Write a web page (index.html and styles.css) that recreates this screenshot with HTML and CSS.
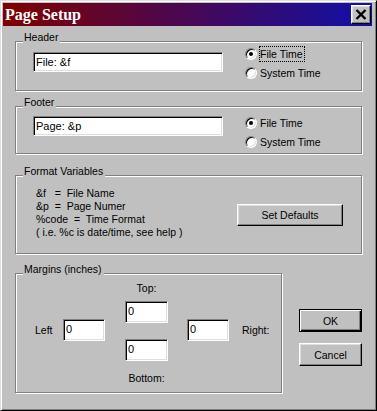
FILE: index.html
```html
<!DOCTYPE html>
<html lang="en">

<head>
    <meta charset="utf-8">
    <meta name="viewport" content="width=device-width, initial-scale=1.0">
    <title>Page Setup</title>
    <link rel="stylesheet" href="styles.css">
</head>

<body>
    <div class="window">
        <div class="titlebar">
            <span class="title">Page Setup</span>
            <button class="close" aria-label="Close">
                <svg width="12" height="11" viewBox="0 0 12 11">
                    <path d="M1.5 1 L10.5 10 M10.5 1 L1.5 10" stroke="#000" stroke-width="2.4" fill="none"></path>
                </svg>
            </button>
        </div>

        <div class="content">
            <div class="group header-group">
                <div class="group-title">Header</div>
                <div class="row">
                    <input class="field wide header-field" type="text" value="File: &amp;f">
                    <div class="radios header-radios">
                        <label class="radio-row"><span class="radio checked"></span><span class="radio-text focus">File Time</span></label>
                        <label class="radio-row"><span class="radio"></span><span class="radio-text">System Time</span></label>
                    </div>
                </div>
            </div>

            <div class="group footer-group">
                <div class="group-title">Footer</div>
                <div class="row">
                    <input class="field wide footer-field" type="text" value="Page: &amp;p">
                    <div class="radios footer-radios">
                        <label class="radio-row"><span class="radio checked"></span><span class="radio-text">File Time</span></label>
                        <label class="radio-row"><span class="radio"></span><span class="radio-text">System Time</span></label>
                    </div>
                </div>
            </div>

            <div class="group format-group">
                <div class="group-title">Format Variables</div>
                <div class="format-row">
                    <div class="vars">
                        <p>&amp;f   =  File Name</p>
                        <p>&amp;p  =  Page Numer</p>
                        <p>%code  =  Time Format</p>
                        <p>( i.e. %c is date/time, see help )</p>
                    </div>
                    <button class="btn defaults">Set Defaults</button>
                </div>
            </div>

            <div class="bottom">
                <div class="group margins-group">
                    <div class="group-title">Margins (inches)</div>
                    <div class="margins">
                        <span class="side-label left-label">Left</span>
                        <input class="field small side-field left-field" type="text" value="0">
                        <div class="middle">
                            <span class="mid-label">Top:</span>
                            <input class="field small top-field" type="text" value="0">
                            <input class="field small bottom-field" type="text" value="0">
                            <span class="mid-label bottom-label">Bottom:</span>
                        </div>
                        <input class="field small side-field right-field" type="text" value="0">
                        <span class="side-label right-label">Right:</span>
                    </div>
                </div>

                <div class="actions">
                    <button class="btn default">OK</button>
                    <button class="btn">Cancel</button>
                </div>
            </div>
        </div>
    </div>
</body>

</html>
```

FILE: styles.css
```css
* {
    box-sizing: border-box;
    margin: 0px;
    padding: 0px;
}

body {
    margin: 0px;
    background: #c0c0c0;
    font-family: "Liberation Sans", Arial, sans-serif;
    font-size: 10.5px;
    color: #000;
}

.window {
    width: 377px;
    height: 411px;
    padding: 2px;
    background: #c0c0c0;
    border: 1px solid;
    border-color: #dfdfdf #000 #000 #dfdfdf;
    box-shadow: inset 1px 1px #fff, inset -1px -1px #808080;
}

/* title bar */
.titlebar {
    height: 23px;
    margin-right: 2px;
    padding: 0 1px 0 2px;
    display: flex;
    align-items: center;
    justify-content: space-between;
    background: linear-gradient(to right, #800000, #1010a8);
}

.title {
    color: #fff;
    font: bold 16px "Liberation Serif", serif;
}

.close {
    width: 20px;
    height: 19px;
    display: flex;
    align-items: center;
    justify-content: center;
    background: #c0c0c0;
    border: 1px solid;
    border-color: #fff #000 #000 #fff;
    box-shadow: inset -1px -1px #808080, inset 1px 1px #dfdfdf;
}

.content {
    padding: 15px 12px 0 12px;
}

/* etched group boxes */
.group {
    border: 1px solid #808080;
    box-shadow: inset 1px 1px #fff, 1px 1px #fff;
}

.group-title {
    display: table;
    margin: -10px 0 0 7px;
    padding: 0 2px 0 1px;
    line-height: 11px;
    background: #c0c0c0;
}

.header-group {
    height: 50px;
}

.footer-group {
    height: 48px;
    margin-top: 15px;
}

.format-group {
    height: 79px;
    margin-top: 21px;
}

.row {
    display: flex;
    align-items: flex-start;
    padding-left: 17px;
}

/* text fields */
.field {
    height: 20px;
    padding: 0 2px;
    background: #fff;
    border: 1px solid;
    border-color: #808080 #fff #fff #808080;
    box-shadow: inset 1px 1px #000, inset -1px -1px #dfdfdf;
    font-family: "Liberation Sans", Arial, sans-serif;
    font-size: 11px;
    color: #000;
    outline: none;
}

.wide {
    width: 190px;
}

.small {
    width: 42px;
    height: 22px;
    padding-bottom: 3px;
}

.header-field {
    margin-top: 9px;
}

.footer-field {
    margin-top: 8px;
}

/* radio buttons */
.radios {
    display: flex;
    flex-direction: column;
    gap: 3px;
    margin-left: 22px;
}

.header-radios {
    margin-top: 3px;
}

.footer-radios {
    margin-top: 7px;
}

.radio-row {
    height: 16px;
    display: flex;
    align-items: center;
    gap: 2px;
}

.radio {
    width: 12px;
    height: 12px;
    display: flex;
    align-items: center;
    justify-content: center;
    border-radius: 50%;
    background: #fff;
    border: 1px solid;
    border-color: #808080 #fff #fff #808080;
    box-shadow: inset 1px 1px #000, inset -1px -1px #dfdfdf;
}

.checked::after {
    content: "";
    width: 4px;
    height: 4px;
    border-radius: 50%;
    background: #000;
}

.radio-text {
    padding: 0 1px 0 0;
    line-height: 14px;
    border: 1px dotted transparent;
}

.focus {
    border-color: #000;
}

/* format variables */
.format-row {
    display: flex;
    justify-content: space-between;
    align-items: flex-start;
    padding: 10px 18px 0 20px;
}

.vars p {
    white-space: pre;
    line-height: 13px;
}

/* buttons */
.btn {
    height: 23px;
    background: #c0c0c0;
    font-family: "Liberation Sans", Arial, sans-serif;
    font-size: 10.5px;
    color: #000;
    border: 1px solid;
    border-color: #fff #000 #000 #fff;
    box-shadow: inset -1px -1px #808080, inset 1px 1px #dfdfdf;
}

.defaults {
    width: 106px;
    height: 22px;
    margin-top: 17px;
}

.default {
    border-color: #000;
    box-shadow: inset 1px 1px #fff, inset -1px -1px #000, inset -2px -2px #808080;
}

/* margins */
.bottom {
    display: flex;
    align-items: flex-start;
    margin-top: 19px;
}

.margins-group {
    width: 267px;
    height: 120px;
}

.margins {
    display: flex;
    align-items: flex-start;
    padding: 7px 0 0 19px;
}

.side-label {
    margin-top: 42px;
    line-height: 13px;
}

.left-label {
    width: 28px;
}

.side-field {
    margin-top: 37px;
}

.right-field {
    margin-left: 19px;
}

.right-label {
    margin-left: 13px;
}

.middle {
    width: 43px;
    margin-left: 20px;
    display: flex;
    flex-direction: column;
    align-items: center;
}

.middle .field {
    width: 43px;
}

.mid-label {
    line-height: 13px;
}

.top-field {
    margin-top: 6px;
}

.bottom-field {
    margin-top: 16px;
}

.bottom-label {
    margin-top: 11px;
}

.actions {
    width: 63px;
    margin: 36px 0 0 17px;
    display: flex;
    flex-direction: column;
    gap: 11px;
}
```
